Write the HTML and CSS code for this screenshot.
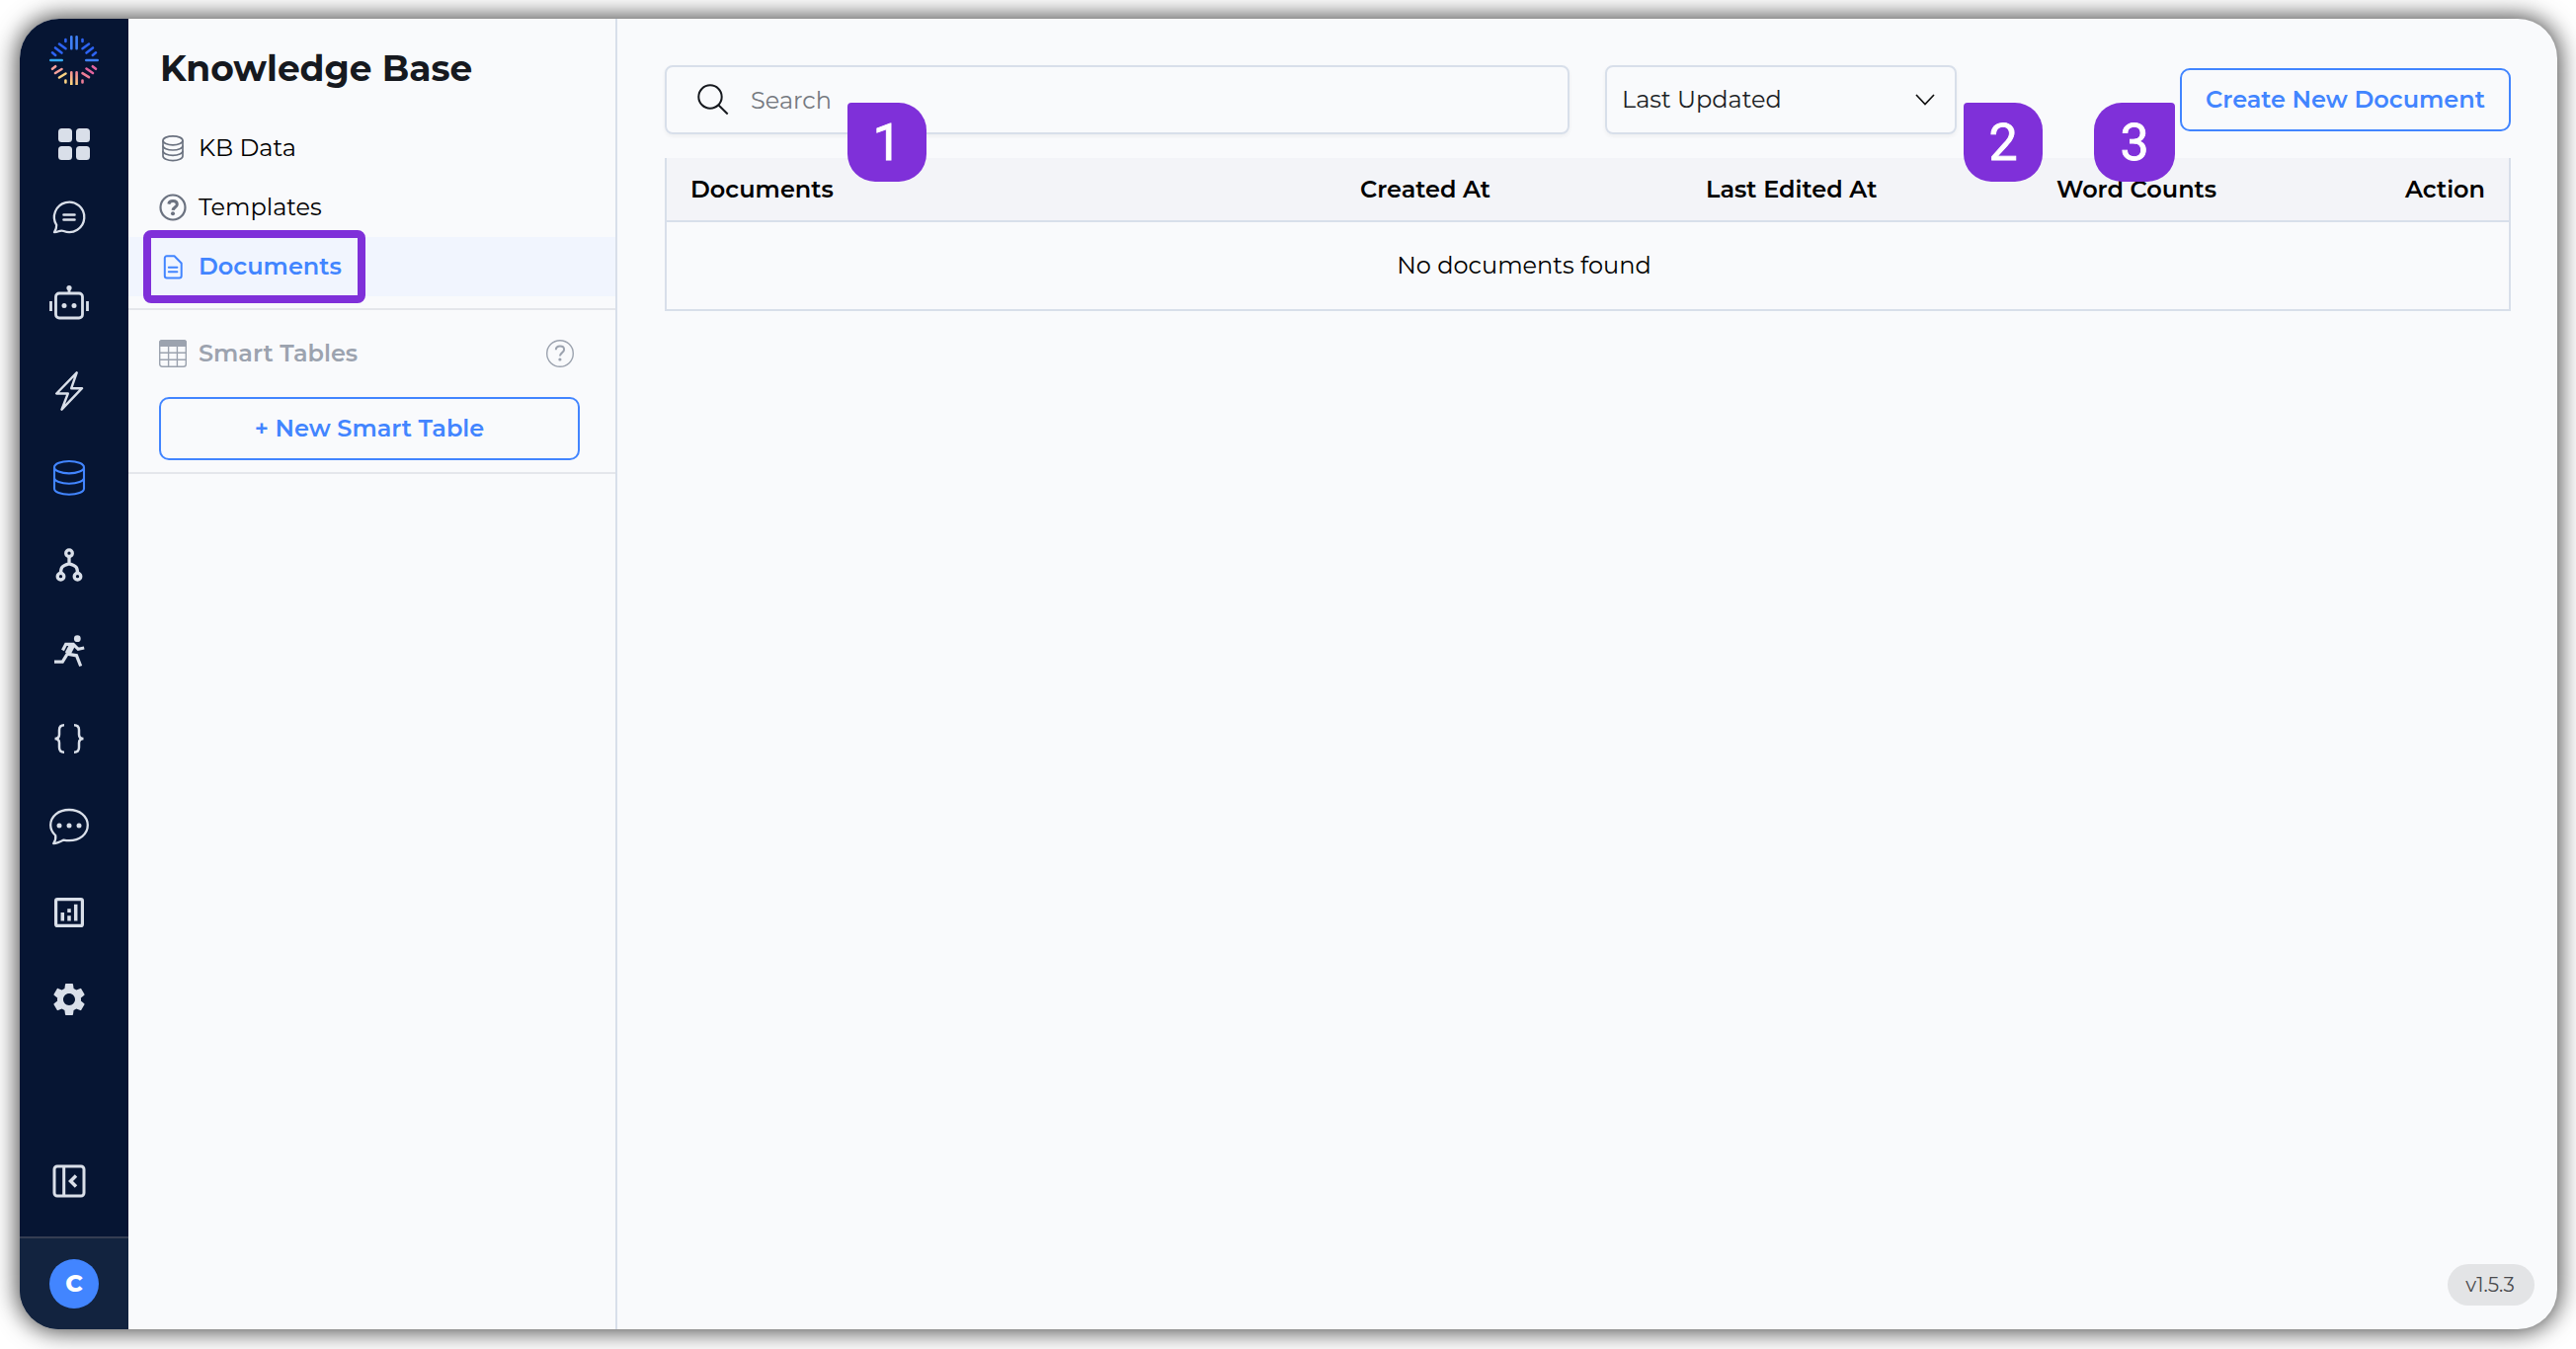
FILE: index.html
```html
<!DOCTYPE html>
<html lang="en">
<head>
    <meta charset="UTF-8">
    <meta name="viewport" content="width=device-width, initial-scale=1.0">
    <title>Knowledge Base</title>
    <link rel="stylesheet" href="styles.css">
</head>
<body>
    <div class="window">
        <nav class="rail">
            <svg class="logo" viewBox="0 0 50 50" fill="none" stroke-width="2.6" stroke-linecap="round">
                <defs>
                    <linearGradient id="warm" gradientUnits="userSpaceOnUse" x1="30" y1="34" x2="22" y2="50">
                        <stop offset="0" stop-color="#ec6a9c"/>
                        <stop offset="1" stop-color="#ffdc7c"/>
                    </linearGradient>
                </defs>
                <path stroke="#3f80f6" d="M22.3 1.3v12M27.6 1.3v12"/>
                <path stroke="#2d63f2" d="M16.4 4v2M33.5 4v2M10 8.5l6.5 4.7M40 8.5l-6.5 4.7M6 12.5l6.5 5M44 12.5l-6.5 5M3 17.3l3.2 2.6M47 17.3l-3.2 2.6"/>
                <path stroke="#34a9ee" d="M1.3 25h11.4"/>
                <path stroke="#3f80f6" d="M37.3 25h11.4"/>
                <path stroke="url(#warm)" d="M22.3 37.3v12M27.6 37.3v12"/>
                <path stroke="#f6a09a" d="M3 33.8l3.2-2.6M6 38l6.5-4"/>
                <path stroke="#fad283" d="M10 42.5l6.5-4M16.4 45.5v2"/>
                <path stroke="#e2649f" d="M47 33.8l-3.2-2.6M44 38l-6.5-4.5"/>
                <path stroke="#ec7d97" d="M40 42.2l-6.5-4M33.5 45.5v2"/>
            </svg>

            <svg class="grid-icon" viewBox="0 0 32 32" fill="#d9dfe9">
                <rect width="14" height="14" rx="3.5"/>
                <rect x="18" width="14" height="14" rx="3.5"/>
                <rect y="18" width="14" height="14" rx="3.5"/>
                <rect x="18" y="18" width="14" height="14" rx="3.5"/>
            </svg>

            <div class="rail-items">
                <!-- inbox -->
                <svg viewBox="0 0 40 40" fill="none" stroke="#d9dfe9" stroke-width="2.3" stroke-linecap="round" stroke-linejoin="round">
                    <path d="M5 35.2c1.4-2 2.3-4.5 2.2-7.3a15.2 15.2 0 1 1 7.3 6.1c-2-.8-3.4-.5-5.2.3-1.4.6-2.8.9-4.3.9z"/>
                    <path d="M14.5 17.5h11M14.5 22.5h11" stroke-width="2.6"/>
                </svg>
                <!-- bot -->
                <svg viewBox="0 0 40 40" fill="none" stroke="#d9dfe9" stroke-width="2.8">
                    <rect x="6.5" y="9" width="27" height="25" rx="3.5"/>
                    <path d="M20 9V3.5"/>
                    <path d="M1.5 17v10M38.5 17v10"/>
                    <g fill="#d9dfe9" stroke="none">
                        <circle cx="20" cy="3.5" r="2.6"/>
                        <circle cx="15" cy="21.5" r="2.5"/>
                        <circle cx="25" cy="21.5" r="2.5"/>
                    </g>
                </svg>
                <!-- triggers -->
                <svg viewBox="0 0 40 40" fill="none" stroke="#d9dfe9" stroke-width="2.4" stroke-linejoin="round">
                    <path d="M27.7 1.3L7.2 22.5h11.6l-6.3 16.2 20.5-21.5H22.2z"/>
                </svg>
                <!-- knowledge base -->
                <svg viewBox="0 0 40 40" fill="none" stroke="#4285ff" stroke-width="2.1">
                    <ellipse cx="20" cy="9.2" rx="15" ry="6.2"/>
                    <path d="M5 9.2v21.500c0 3.400 6.700 6 15 6s15-2.600 15-6V9.200"/>
                    <path d="M5 20c0 3.200 6.700 5.700 15 5.700s15-2.500 15-5.700"/>
                </svg>
                <!-- flows -->
                <svg viewBox="0 0 40 40" fill="none" stroke="#d9dfe9" stroke-width="3.3">
                    <circle cx="20" cy="8.2" r="3.3"/>
                    <circle cx="11.5" cy="31.7" r="3.3"/>
                    <circle cx="28.5" cy="31.7" r="3.3"/>
                    <path d="M20 11.5V19M11.5 28.5c0-6 1.5-8 8.5-9.7 7 1.7 8.5 3.7 8.5 9.7"/>
                </svg>
                <!-- runs -->
                <svg viewBox="0 0 40 40" fill="none" stroke="#d9dfe9" stroke-width="3.2">
                    <circle cx="28.3" cy="6.7" r="3.4" fill="#d9dfe9" stroke="none"/>
                    <path d="M5 30.2h8.3l5.2-8.5"/>
                    <path d="M13.5 18.5l3.2-6.2h7.5l5 5 6-1.3"/>
                    <path d="M23.5 12.5l-5 9.5" stroke-width="6"/>
                    <path d="M18 22.2l9.5 1.6 4.2 10.7"/>
                </svg>
                <!-- variables -->
                <svg viewBox="0 0 40 40" fill="none" stroke="#d9dfe9" stroke-width="2.5">
                    <path d="M15 6.2c-4 0-5 1.8-5 5v4.5c0 2.5-1.3 4.3-4.500 4.300 3.200 0 4.500 1.800 4.500 4.300v4.500c0 3.200 1 5 5 5"/>
                    <path d="M25 6.2c4 0 5 1.8 5 5v4.5c0 2.5 1.3 4.3 4.500 4.300-3.200 0-4.500 1.800-4.500 4.300v4.500c0 3.200-1 5-5 5"/>
                </svg>
                <!-- chat -->
                <svg viewBox="0 0 40 40" fill="none" stroke="#d9dfe9" stroke-width="2.3" stroke-linejoin="round">
                    <path d="M4.2 38.2c1.8-2.6 2.500-5 2-8.200C3 27 1.200 23.600 1.200 19.500 1.200 10.400 9.500 4 20 4s18.800 6.300 18.800 15.600S30.500 35.200 20 35.200c-2 0-3.700-.2-5.500-.6-3 1.600-6.600 3.400-10.300 3.600z"/>
                    <g fill="#d9dfe9" stroke="none">
                        <circle cx="10" cy="20" r="2.5"/>
                        <circle cx="20" cy="20" r="2.5"/>
                        <circle cx="30" cy="20" r="2.5"/>
                    </g>
                </svg>
                <!-- analytics -->
                <svg viewBox="0 0 40 40" fill="none" stroke="#d9dfe9" stroke-width="3.2">
                    <rect x="6.6" y="6.6" width="26.8" height="26.8" rx="1.5"/>
                    <path d="M13.3 20v8.5M20 16.2v3.8M20 23.3v5.2M26.7 11.8v16.7" stroke-width="3.5"/>
                </svg>
                <!-- settings -->
                <svg viewBox="0 0 24 24" fill="#d9dfe9">
                    <path d="M19.14 12.94c.04-.3.06-.61.06-.94 0-.32-.02-.64-.07-.94l2.03-1.58a.49.49 0 0 0 .12-.61l-1.92-3.32a.488.488 0 0 0-.59-.22l-2.39.96c-.5-.38-1.03-.7-1.62-.94l-.36-2.54a.484.484 0 0 0-.48-.41h-3.84c-.24 0-.43.17-.47.41l-.36 2.54c-.59.24-1.13.57-1.62.94l-2.39-.96c-.22-.08-.47 0-.59.22L2.74 8.87c-.12.21-.08.47.12.61l2.03 1.58c-.05.3-.09.63-.09.94s.02.64.07.94l-2.03 1.58a.49.49 0 0 0-.12.61l1.92 3.32c.12.22.37.29.59.22l2.39-.96c.5.38 1.03.7 1.62.94l.36 2.54c.05.24.24.41.48.41h3.84c.24 0 .44-.17.47-.41l.36-2.54c.59-.24 1.13-.56 1.62-.94l2.39.96c.22.08.47 0 .59-.22l1.92-3.32c.12-.22.07-.47-.12-.61l-2.01-1.58zM12 15.6c-1.98 0-3.6-1.62-3.6-3.6s1.62-3.6 3.6-3.6 3.6 1.62 3.6 3.6-1.62 3.6-3.6 3.6z"/>
                </svg>
            </div>

            <svg class="collapse" viewBox="0 0 40 40" fill="none" stroke="#d9dfe9" stroke-width="3">
                <rect x="5" y="5" width="30" height="30" rx="3"/>
                <path d="M14.7 5v30"/>
                <path d="M27 14.5L21.500 20l5.500 5.500" stroke-width="3.5"/>
            </svg>
            <div class="rail-footer">
                <div class="avatar">C</div>
            </div>
        </nav>

        <aside class="panel">
            <h1>Knowledge Base</h1>
            <a class="item">
                <svg viewBox="0 0 28 28" fill="none" stroke="#6b7280" stroke-width="1.7">
                    <ellipse cx="14" cy="6.3" rx="10" ry="4.5"/>
                    <path d="M4 6.3v15.8c0 2.5 4.5 4.5 10 4.5s10-2 10-4.500V6.300"/>
                    <path d="M4 11.5c0 2.5 4.5 4.5 10 4.500s10-2 10-4.500M4 16.800c0 2.500 4.500 4.500 10 4.500s10-2 10-4.500"/>
                </svg>
                <span>KB Data</span>
            </a>
            <a class="item">
                <svg viewBox="0 0 28 28" fill="none" stroke="#6b7280" stroke-width="2.2">
                    <circle cx="14" cy="14" r="12.5"/>
                    <path d="M9.8 10.6c.4-2 2-3 4.3-3 2.6 0 4.2 1.3 4.2 3.3 0 2.7-3.9 2.9-4.2 6" stroke-width="3"/>
                    <circle cx="14" cy="20.2" r="2" fill="#6b7280" stroke="none"/>
                </svg>
                <span>Templates</span>
            </a>
            <a class="item active">
                <svg viewBox="0 0 28 28" fill="none" stroke="#4285ff" stroke-width="2" stroke-linejoin="round">
                    <path d="M8 3.3h7.5l7.2 7.2v12.7c0 1.5-.7 2.2-2.2 2.2H8c-1.5 0-2.2-.7-2.2-2.2V5.5c0-1.5.7-2.2 2.2-2.2z"/>
                    <path d="M9.8 14.8h8.6M9.8 19.3h8.6" stroke-linecap="round"/>
                </svg>
                <span>Documents</span>
                <div class="highlight"></div>
            </a>
            <section class="tables">
                <div class="tables-head">
                    <svg viewBox="0 0 28 28" fill="none" stroke="#9ca3af" stroke-width="1.4">
                        <rect x=".7" y=".7" width="26.6" height="26.6" rx="2.5"/>
                        <path d="M1 13.3h26M1 20.2h26M9.6 7v20M18.4 7v20"/>
                        <path d="M0 7V3a3 3 0 0 1 3-3h22a3 3 0 0 1 3 3v4z" fill="#9ca3af" stroke="none"/>
                    </svg>
                    <span>Smart Tables</span>
                    <svg viewBox="0 0 28 28" fill="none" stroke="#9ca3af" stroke-width="1.4">
                        <circle cx="14" cy="14" r="13.3"/>
                        <path d="M9.8 10.3c.1-2.3 1.7-3.7 4.2-3.7 2.4 0 4.1 1.4 4.1 3.4 0 3.1-4.2 3.2-4.2 6.6" stroke-width="2"/>
                        <circle cx="13.9" cy="20" r="1.6" fill="#9ca3af" stroke="none"/>
                    </svg>
                </div>
                <button class="btn new-table">+ New Smart Table</button>
            </section>
        </aside>

        <main class="content">
            <div class="toolbar">
                <div class="search">
                    <svg viewBox="0 0 32 32" fill="none" stroke="#16191f" stroke-width="2">
                        <circle cx="13" cy="13" r="11.7"/>
                        <path d="M21.3 21.3l9.4 9.2"/>
                    </svg>
                    <span>Search</span>
                </div>
                <div class="select">
                    <span>Last Updated</span>
                    <svg viewBox="0 0 20 12" fill="none" stroke="#111" stroke-width="1.7">
                        <path d="M1 1l9 9.5L19 1"/>
                    </svg>
                </div>
                <button class="btn create">Create New Document</button>
                <div class="marker marker-1">1</div>
                <div class="marker marker-2">2</div>
                <div class="marker marker-3">3</div>
            </div>
            <table>
                <colgroup>
                    <col class="col-doc"><col class="col-created"><col class="col-edited"><col class="col-words"><col>
                </colgroup>
                <thead>
                    <tr>
                        <th>Documents</th>
                        <th>Created At</th>
                        <th>Last Edited At</th>
                        <th>Word Counts</th>
                        <th>Action</th>
                    </tr>
                </thead>
                <tbody>
                    <tr>
                        <td colspan="4">No documents found</td>
                        <td></td>
                    </tr>
                </tbody>
            </table>
            <div class="version">v1.5.3</div>
        </main>
    </div>
</body>
</html>
```
FILE: styles.css
```css
* {
    box-sizing: border-box;
}
body {
    margin: 0;
    padding: 19px 19px 20px 20px;
    height: 1366px;
    background: #fff;
    font-family: Montserrat, Inter, "Open Sans", sans-serif;
    font-size: 24px;
    color: #000;
    overflow: hidden;
}
svg {
    display: block;
    flex: none;
}
.window {
    display: flex;
    height: 1327px;
    border-radius: 40px;
    overflow: hidden;
    background: #f9fafc;
    box-shadow: 0 0 24px 2px rgba(0, 0, 0, 0.75);
}

/* left icon rail */
.rail {
    width: 110px;
    flex: none;
    display: flex;
    flex-direction: column;
    background: #061533;
}
.logo {
    width: 50px;
    height: 50px;
    margin: 17px 0 0 30px;
}
.grid-icon {
    width: 32px;
    height: 32px;
    margin: 44px 0 0 39px;
}
.rail-items {
    display: flex;
    flex-direction: column;
    gap: 48px;
    margin: 38px 0 0 30px;
}
.rail-items svg,
.collapse {
    width: 40px;
    height: 40px;
}
.collapse {
    margin: auto 0 36px 30px;
}
.rail-footer {
    height: 94px;
    padding: 21px 0 0 30px;
    border-top: 2px solid #343d52;
    background: #12233f;
}
.avatar {
    width: 50px;
    height: 50px;
    border-radius: 50%;
    background: #4285ff;
    color: #fff;
    font-weight: 800;
    line-height: 50px;
    text-align: center;
}

/* knowledge base panel */
.panel {
    width: 495px;
    flex: none;
    border-right: 2px solid #d8dfea;
}
h1 {
    margin: 25px 0 26px 32px;
    font-size: 36px;
    font-weight: 700;
    line-height: 50px;
    color: #16191f;
}
.item {
    position: relative;
    display: flex;
    align-items: center;
    gap: 12px;
    height: 60px;
    padding-left: 31px;
    line-height: 28px;
}
.item svg {
    width: 28px;
    height: 28px;
}
.active {
    background: #f1f5fe;
    color: #4285ff;
    font-weight: 600;
}
.highlight {
    position: absolute;
    left: 15px;
    top: -7px;
    width: 225px;
    height: 74px;
    border: 8px solid #7f30d9;
    border-radius: 8px;
}
.tables {
    margin-top: 12px;
    padding: 30px 36px 12px 31px;
    border-top: 2px solid #e4e6eb;
    border-bottom: 2px solid #e4e6eb;
}
.tables-head {
    display: flex;
    align-items: center;
    gap: 12px;
    padding-right: 6px;
    color: #9ca3af;
    font-weight: 600;
    line-height: 28px;
}
.tables-head span {
    flex: 1;
}
.tables-head svg {
    width: 28px;
    height: 28px;
}
.btn {
    display: block;
    height: 64px;
    padding: 0;
    background: transparent;
    border: 2px solid #4285ff;
    border-radius: 10px;
    color: #4285ff;
    font: inherit;
    font-weight: 600;
    line-height: 60px;
}
.new-table {
    width: 426px;
    margin-top: 30px;
}

/* documents list */
.content {
    position: relative;
    flex: 1;
    padding: 47px 47px 0 48px;
}
.toolbar {
    position: relative;
    display: flex;
    align-items: center;
    height: 70px;
    margin-bottom: 24px;
}
.search,
.select {
    display: flex;
    align-items: center;
    height: 70px;
    border: 2px solid #d8dfea;
    border-radius: 8px;
    box-shadow: 0 2px 4px rgba(0, 0, 0, 0.05);
}
.search {
    width: 916px;
    padding-left: 31px;
    gap: 22px;
    color: #757980;
    line-height: 30px;
}
.search span {
    padding-top: 2px;
}
.search svg {
    width: 32px;
    height: 32px;
}
.select {
    width: 356px;
    margin-left: 36px;
    padding: 0 20px 0 15px;
    justify-content: space-between;
    color: #1c1f26;
    line-height: 30px;
}
.select svg {
    width: 20px;
    height: 12px;
}
.create {
    width: 335px;
    margin-left: auto;
}

/* numbered callouts */
.marker {
    position: absolute;
    top: 38px;
    width: 80px;
    height: 80px;
    border-radius: 4px 28px 28px 28px;
    background: #7f30d9;
    color: #fff;
    font: 52px/82px Roboto, Arial, sans-serif;
    -webkit-text-stroke: 0.8px #fff;
    text-align: center;
}
.marker-1 {
    left: 185px;
}
.marker-2 {
    left: 1315px;
}
.marker-3 {
    left: 1447px;
    width: 82px;
    border-radius: 28px 4px 28px 28px;
}

table {
    width: 1869px;
    table-layout: fixed;
    border-spacing: 0;
    border: 2px solid #d8dfea;
    border-top: 0;
}
.col-doc {
    width: 678px;
}
.col-created {
    width: 350px;
}
.col-edited {
    width: 355px;
}
.col-words {
    width: 353px;
}
th {
    height: 65px;
    padding: 0 0 0 24px;
    background: #f3f4f8;
    border-bottom: 2px solid #d8dfea;
    font-weight: 600;
    text-align: left;
}
td {
    height: 88px;
    padding: 0 0 1px;
    text-align: center;
}
.version {
    position: absolute;
    right: 23px;
    bottom: 24px;
    width: 88px;
    height: 42px;
    padding-right: 2px;
    border-radius: 21px;
    background: #e3e4e6;
    color: #4a4b4e;
    font-size: 20px;
    line-height: 42px;
    text-align: center;
}
```
